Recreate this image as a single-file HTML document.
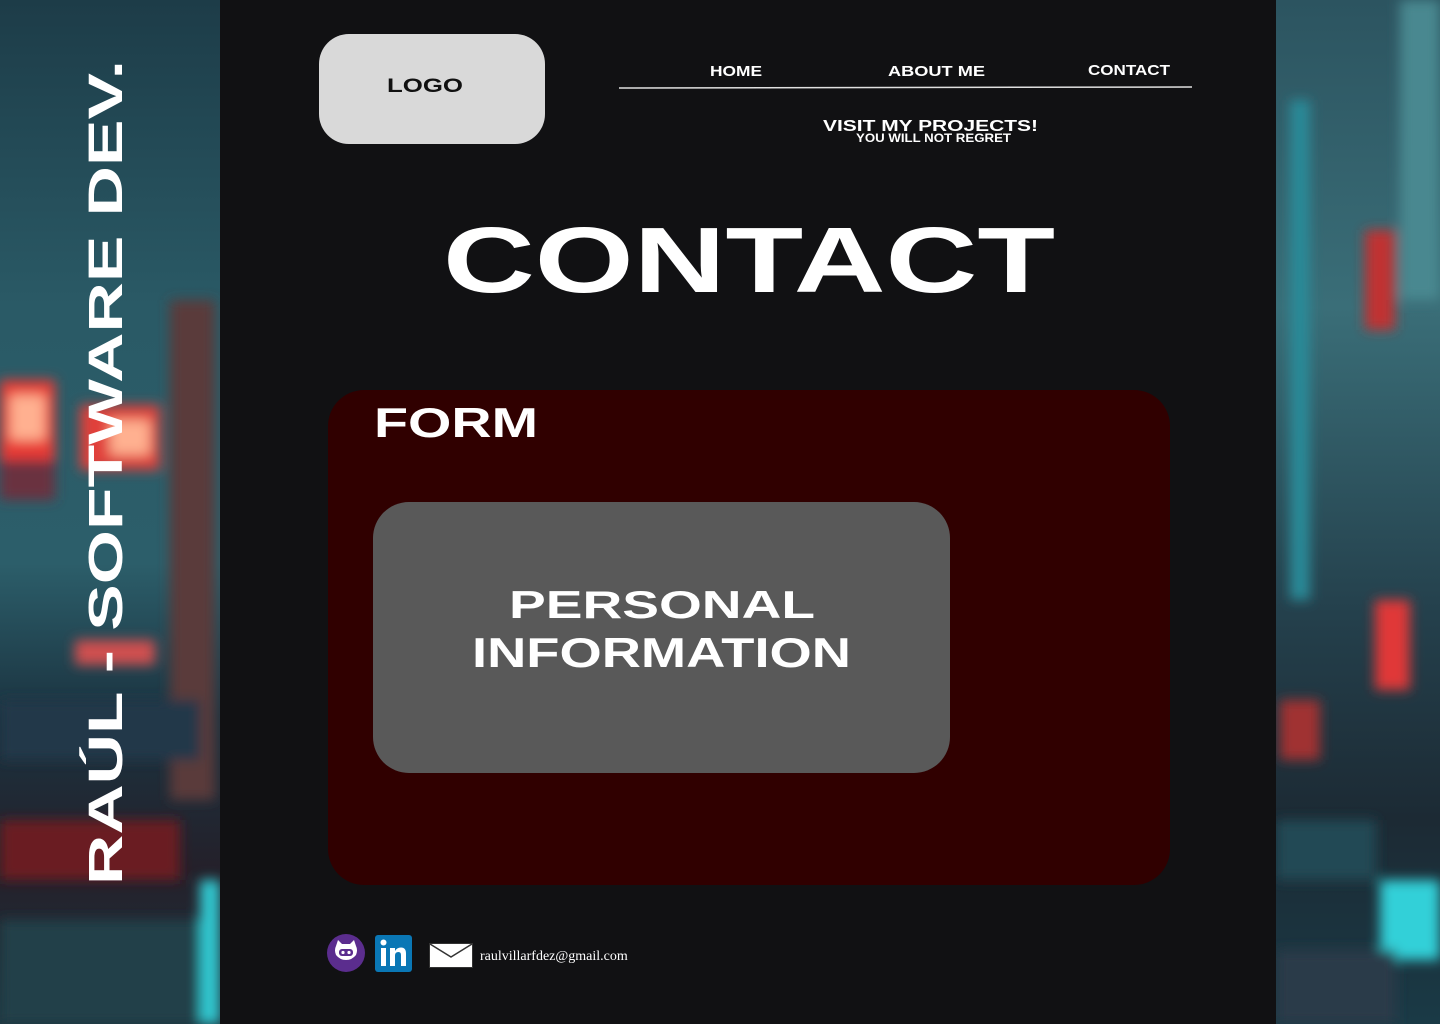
<!DOCTYPE html>
<html><head><meta charset="utf-8"><style>
html,body{margin:0;padding:0;width:1440px;height:1024px;overflow:hidden;background:#111113}
svg{display:block}
</style></head><body>
<svg width="1440" height="1024" xmlns="http://www.w3.org/2000/svg" font-family="Liberation Sans, sans-serif" font-weight="bold">
<defs>
<linearGradient id="lg" x1="0" y1="0" x2="0" y2="1">
<stop offset="0" stop-color="#1d3c48"/><stop offset="0.3" stop-color="#2a5a66"/><stop offset="0.55" stop-color="#2c5e6a"/><stop offset="0.7" stop-color="#1b3340"/><stop offset="0.85" stop-color="#24202a"/><stop offset="1" stop-color="#1e3540"/>
</linearGradient>
<linearGradient id="rg" x1="0" y1="0" x2="0" y2="1">
<stop offset="0" stop-color="#2c5460"/><stop offset="0.3" stop-color="#3a6e78"/><stop offset="0.6" stop-color="#24404c"/><stop offset="0.8" stop-color="#1c2a34"/><stop offset="1" stop-color="#1a3a46"/>
</linearGradient>
<filter id="bl"><feGaussianBlur stdDeviation="6"/></filter>
<clipPath id="cl"><rect x="0" y="0" width="220" height="1024"/></clipPath>
<clipPath id="cr"><rect x="1276" y="0" width="164" height="1024"/></clipPath>
</defs>
<rect width="1440" height="1024" fill="#111113"/>
<!-- left panel -->
<rect x="0" y="0" width="220" height="1024" fill="url(#lg)"/>
<g filter="url(#bl)" clip-path="url(#cl)">
<rect x="0" y="380" width="55" height="80" fill="#e83a35"/>
<rect x="10" y="395" width="35" height="45" fill="#ffb090"/>
<rect x="80" y="405" width="80" height="65" fill="#e0403a"/>
<rect x="110" y="420" width="40" height="35" fill="#ffb090"/>
<rect x="0" y="460" width="55" height="40" fill="#6a3040"/>
<rect x="75" y="640" width="80" height="25" fill="#d05050"/>
<rect x="0" y="820" width="180" height="60" fill="#6a1a20"/>
<rect x="170" y="300" width="45" height="500" fill="#5a3a3a"/>
<rect x="200" y="880" width="20" height="144" fill="#30c8d0"/>
<rect x="0" y="920" width="200" height="104" fill="#24404a"/>
<rect x="0" y="700" width="200" height="60" fill="#203848"/>
</g>
<text transform="translate(122,885) rotate(-90)" font-size="48" fill="#fff" textLength="825" lengthAdjust="spacingAndGlyphs">RAÚL - SOFTWARE DEV.</text>
<!-- right panel -->
<rect x="1276" y="0" width="164" height="1024" fill="url(#rg)"/>
<g filter="url(#bl)" clip-path="url(#cr)">
<rect x="1400" y="0" width="40" height="300" fill="#4a8890"/>
<rect x="1365" y="230" width="30" height="100" fill="#c03030"/>
<rect x="1375" y="600" width="35" height="90" fill="#e03838"/>
<rect x="1280" y="700" width="40" height="60" fill="#a03030"/>
<rect x="1290" y="100" width="20" height="500" fill="#2a8a98"/>
<rect x="1380" y="880" width="60" height="80" fill="#30d0d8"/>
<rect x="1276" y="950" width="120" height="74" fill="#2a3a48"/>
<rect x="1276" y="820" width="100" height="60" fill="#204a55"/>
</g>
<!-- header -->
<rect x="319" y="34" width="226" height="110" rx="30" fill="#d9d9d9"/>
<text x="387" y="92" font-size="19" fill="#111" textLength="76" lengthAdjust="spacingAndGlyphs">LOGO</text>
<text x="710" y="76" font-size="15" fill="#fff" textLength="52" lengthAdjust="spacingAndGlyphs">HOME</text>
<text x="888" y="76" font-size="15" fill="#fff" textLength="97" lengthAdjust="spacingAndGlyphs">ABOUT ME</text>
<text x="1088" y="75" font-size="15" fill="#fff" textLength="82" lengthAdjust="spacingAndGlyphs">CONTACT</text>
<line x1="619" y1="88" x2="1192" y2="87" stroke="#e0e0e0" stroke-width="1.5"/>
<text x="823" y="131" font-size="16" fill="#fff" textLength="215" lengthAdjust="spacingAndGlyphs">VISIT MY PROJECTS!</text>
<text x="856" y="142" font-size="12" fill="#fff" textLength="155" lengthAdjust="spacingAndGlyphs">YOU WILL NOT REGRET</text>
<text x="443" y="292" font-size="93" fill="#fff" textLength="612" lengthAdjust="spacingAndGlyphs">CONTACT</text>
<!-- form -->
<rect x="328" y="390" width="842" height="495" rx="36" fill="#300000"/>
<text x="374" y="437" font-size="42" fill="#fff" textLength="164" lengthAdjust="spacingAndGlyphs">FORM</text>
<rect x="373" y="502" width="577" height="271" rx="36" fill="#595959"/>
<text x="509" y="618" font-size="39" fill="#fff" textLength="306" lengthAdjust="spacingAndGlyphs">PERSONAL</text>
<text x="472" y="667" font-size="42" fill="#fff" textLength="379" lengthAdjust="spacingAndGlyphs">INFORMATION</text>
<!-- footer icons -->
<circle cx="346" cy="953" r="19" fill="#5b2d8e"/>
<path d="M336 946 l2 -6 4 4 h8 l4 -4 2 6 q2 4 0 9 q-4 5 -10 5 q-6 0 -10 -5 q-2 -5 0 -9z" fill="#fff"/>
<rect x="339" y="949" width="14" height="7" rx="3" fill="#5b2d8e"/>
<circle cx="343" cy="952.5" r="1.6" fill="#fff"/><circle cx="349" cy="952.5" r="1.6" fill="#fff"/>
<rect x="375" y="935" width="37" height="37" rx="3" fill="#0a77b5"/>
<rect x="381" y="948" width="5" height="18" fill="#fff"/>
<circle cx="383.5" cy="942.5" r="3" fill="#fff"/>
<path d="M390 948 h5 v3 q2 -3.5 6 -3.5 q5 0 5 6 v12.5 h-5 v-11 q0 -3 -2.5 -3 q-3.5 0 -3.5 3.5 v10.5 h-5z" fill="#fff"/>
<rect x="429.5" y="943.5" width="43" height="24" fill="#fff" stroke="#333"/>
<path d="M430 944 L451 957 L472 944" fill="none" stroke="#333" stroke-width="1.5"/>
<text x="480" y="960" font-family="Liberation Serif, serif" font-weight="normal" font-size="14" fill="#fff">raulvillarfdez@gmail.com</text>
</svg>
</body></html>
